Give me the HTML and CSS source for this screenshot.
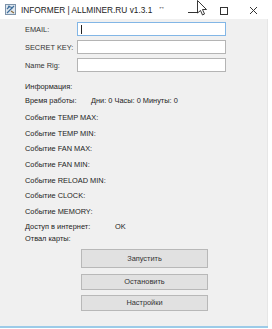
FILE: index.html
```html
<!DOCTYPE html>
<html lang="ru">
<head>
<meta charset="UTF-8">
<meta name="viewport" content="width=device-width, initial-scale=1.0">
<title>INFORMER | ALLMINER.RU v1.3.1</title>
<link rel="stylesheet" href="styles.css">
</head>
<body>
<div class="window">
    <div class="title-bar">
        <svg class="app-icon" width="11" height="11" viewBox="0 0 11 11">
            <rect x="0.5" y="0.5" width="10" height="10" fill="#dfe7ef" stroke="#7d93aa"/>
            <path d="M2 9 L9 2 M3 2 L8 4 M2 5 L5 2" stroke="#3f6f9c" stroke-width="1.2" fill="none"/>
            <path d="M6 7 L9 9" stroke="#8a6b3c" stroke-width="1.2"/>
        </svg>
        <span class="title-text">INFORMER | ALLMINER.RU v1.3.1</span>
        <span class="title-arrows">↔</span>
        <div class="tb-buttons">
            <span class="tb-min"></span>
            <span class="tb-max"></span>
            <svg class="tb-close" width="9" height="9" viewBox="0 0 9 9">
                <path d="M1 1 L8 8 M8 1 L1 8" stroke="#333" stroke-width="1"/>
            </svg>
        </div>
        <svg class="cursor" width="11" height="16" viewBox="0 0 11 16">
            <path d="M0.5 0.5 V13 L3.5 10.5 L5.5 15 L7.5 14 L5.5 9.5 L9.5 9.5 Z" fill="#fff" stroke="#222" stroke-width="0.9" stroke-linejoin="round"/>
        </svg>
    </div>
    <div class="client">
        <div class="field-row">
            <label class="field-label">EMAIL:</label>
            <div class="field-input focused"><span class="caret"></span></div>
        </div>
        <div class="field-row">
            <label class="field-label">SECRET KEY:</label>
            <div class="field-input"></div>
        </div>
        <div class="field-row">
            <label class="field-label">Name Rig:</label>
            <div class="field-input"></div>
        </div>

        <div class="info-title">Информация:</div>
        <div class="info-row uptime">
            <span class="info-label">Время работы:</span>
            <span class="info-value">Дни: 0 Часы: 0 Минуты: 0</span>
        </div>
        <div class="event-row">Событие TEMP MAX:</div>
        <div class="event-row">Событие TEMP MIN:</div>
        <div class="event-row">Событие FAN MAX:</div>
        <div class="event-row">Событие FAN MIN:</div>
        <div class="event-row">Событие RELOAD MIN:</div>
        <div class="event-row">Событие CLOCK:</div>
        <div class="event-row">Событие MEMORY:</div>
        <div class="info-row net">
            <span class="info-label net-label">Доступ в интернет:</span>
            <span class="net-value">OK</span>
        </div>
        <div class="info-row cards">Отвал карты:</div>

        <div class="buttons">
            <button class="win-button first">Запустить</button>
            <button class="win-button">Остановить</button>
            <button class="win-button">Настройки</button>
        </div>
    </div>
    <div class="bottom-line"></div>
</div>
</body>
</html>
```

FILE: styles.css
```css
body, html {
    margin: 0;
    padding: 0;
    background-color: #ffffff;
    font-family: 'Liberation Sans', Arial, sans-serif;
    color: #222;
}

.window {
    width: 268px;
    height: 329px;
    display: flex;
    flex-direction: column;
}

.title-bar {
    height: 19px;
    flex-shrink: 0;
    display: flex;
    align-items: center;
    background-color: #ffffff;
    position: relative;
    white-space: nowrap;
}

.app-icon {
    margin-left: 5px;
    margin-right: 5px;
    flex-shrink: 0;
}

.title-text {
    font-size: 8.3px;
    color: #222;
}

.title-arrows {
    font-size: 7px;
    font-weight: bold;
    margin-left: 6px;
    margin-top: -7px;
    color: #333;
}

.tb-buttons {
    margin-left: auto;
    width: 80px;
    height: 19px;
    flex-shrink: 0;
    display: flex;
    align-items: center;
    justify-content: space-between;
    padding: 2px 10px 0 0;
    box-sizing: border-box;
}

.tb-min {
    width: 10px;
    height: 1px;
    margin-top: 3px;
    background-color: #333;
}

.tb-max {
    width: 6px;
    height: 6px;
    border: 1px solid #333;
}

/* mouse pointer hovering near minimize */
.cursor {
    position: absolute;
    left: 197px;
    top: 0;
}

.client {
    flex: 1;
    background-color: #f0f0f0;
    border-right: 1px solid #e6e6e6;
    padding: 3px 0 0 25px;
    font-size: 7.4px;
    white-space: nowrap;
}

.field-row {
    display: flex;
    align-items: center;
    height: 14px;
    margin-bottom: 4px;
}

.field-row + .field-row + .field-row {
    margin-bottom: 0;
}

.field-label {
    width: 52px;
    font-size: 7.4px;
    color: #333;
}

.field-input {
    width: 147px;
    height: 12px;
    border: 1px solid #b4b4b4;
    background-color: #ffffff;
    display: flex;
    align-items: center;
}

.field-input.focused {
    border-color: #82b6e6;
}

.caret {
    width: 1px;
    height: 9px;
    margin-left: 3px;
    background-color: #222;
}

.info-title {
    margin-top: 10px;
    height: 14px;
    line-height: 10px;
}

.info-row {
    display: flex;
    height: 10px;
    line-height: 10px;
}

.uptime {
    height: 17px;
}

.info-label {
    width: 66px;
}

.net-label {
    width: 90px;
}

.event-row {
    height: 15.7px;
    line-height: 10px;
}

.net {
    margin-top: -1px;
    height: 12px;
}

.cards {
    height: 11px;
}

.buttons {
    display: flex;
    flex-direction: column;
    gap: 5px;
    margin-top: 4px;
    margin-left: 56px;
}

.win-button {
    width: 127px;
    height: 16px;
    padding: 0;
    border: 1px solid #b8b8b8;
    background-color: #e1e1e1;
    font-family: 'Liberation Sans', Arial, sans-serif;
    font-size: 7.4px;
    color: #333;
}

.win-button.first {
    height: 19px;
    margin-bottom: 1px;
}

.bottom-line {
    height: 2px;
    flex-shrink: 0;
    background-color: #9ccbe8;
    margin-bottom: 1px;
}
```
